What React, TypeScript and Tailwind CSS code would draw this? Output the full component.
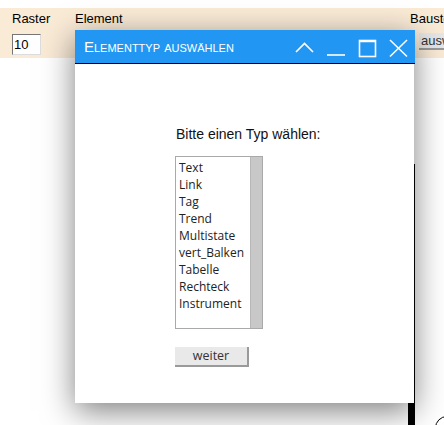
const types = ['Text', 'Link', 'Tag', 'Trend', 'Multistate', 'vert_Balken', 'Tabelle', 'Rechteck', 'Instrument'];

export default function App() {
  return (
    <div className="relative h-[425px] w-[444px] overflow-hidden bg-white font-['Liberation_Sans',Arial,sans-serif] text-black">
      <div className="h-2" />
      <div className="flex h-[50px] bg-[#faebd7] text-[13px]">
        <div className="w-[75px] shrink-0 pl-3 pt-[2px]">
          <div className="leading-[18px]">Raster</div>
          <input
            defaultValue="10"
            className="mt-[6px] h-[21px] w-[29px] border border-t-[#767676] border-l-[#767676] border-r-[#dcdcdc] border-b-[#dcdcdc] bg-white px-[1px] text-[13px] outline-none"
          />
        </div>
        <div className="w-[335px] shrink-0 pt-[2px] leading-[18px]">Element</div>
        <div className="shrink-0 pt-[2px]">
          <div className="leading-[18px] whitespace-nowrap">Bausteine</div>
          <button className="mt-[5px] ml-[9px] h-[17px] border-b-2 border-[#9a9a9a] bg-[#e6e6e6] px-[2px] text-[13px] leading-[15px] text-[#333] whitespace-nowrap">
            auswählen
          </button>
        </div>
      </div>
      <div className="flex">
        <div className="w-[408px] shrink-0" />
        <div className="mt-[106px] h-[300px] w-[7px] shrink-0 bg-black" />
      </div>

      {/* decoration peeking out at the bottom right */}
      <div className="absolute left-[435px] top-[416px] h-6 w-6 rounded-full border border-black" />

      {/* dialog */}
      <div className="absolute left-[75px] top-[30px] flex h-[373px] w-[339px] flex-col bg-white shadow-[0_8px_30px_rgba(0,0,0,0.5)]">
        <div className="flex h-[34px] w-[340px] items-center border-b border-black bg-[#2196f3] pl-[9px] text-white">
          <div className="flex-1 pt-[1px] text-[15px] [font-variant:small-caps]">Elementtyp auswählen</div>
          <svg width="120" height="34" viewBox="0 0 120 34" fill="none" stroke="white" strokeWidth="1.6">
            {/* collapse */}
            <polyline points="1,22 9.5,13.5 18,22" />
            {/* minimise */}
            <line x1="32" y1="25" x2="50" y2="25" />
            {/* maximise */}
            <rect x="64.5" y="10.5" width="16" height="16" />
            <line x1="64" y1="11.5" x2="81" y2="11.5" strokeWidth="1.5" />
            {/* close */}
            <line x1="95" y1="10" x2="112" y2="26.5" />
            <line x1="112" y1="10" x2="95" y2="26.5" />
          </svg>
        </div>
        <div className="flex flex-col pl-[100px] pt-[61px]">
          <div className="pl-[1px] text-[14px] leading-[18px] text-[#111]">Bitte einen Typ wählen:</div>
          <div className="mt-[13px] flex h-[173px] w-[88px] border border-[#a9a9a9] font-['Open_Sans',sans-serif] text-[12px] text-[#222]">
            <div className="flex-1 pl-[3px] pt-[2px] leading-[17px]">
              {types.map((t) => (
                <div key={t} className="whitespace-nowrap">
                  {t}
                </div>
              ))}
            </div>
            <div className="w-[12px] border-l border-[#b8b8b8] bg-[#c8c8c8]" />
          </div>
          <button className="mt-[18px] h-[20px] w-[74px] border-r-2 border-b-2 border-[#9a9a9a] bg-[#e9e9e9] font-['Open_Sans',sans-serif] text-[12.5px] leading-[18px] text-[#333]">
            weiter
          </button>
        </div>
      </div>
    </div>
  );
}
